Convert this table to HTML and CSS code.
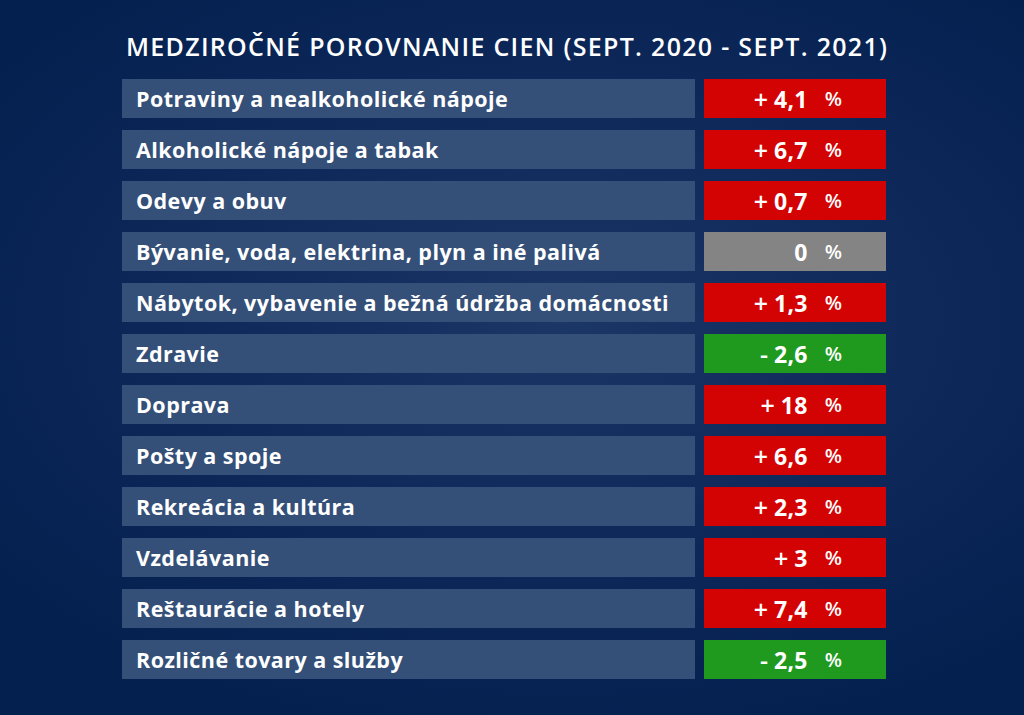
FILE: index.html
```html
<!DOCTYPE html>
<html lang="sk">
<head>
<meta charset="utf-8">
<link rel="stylesheet" href="styles.css">
</head>
<body>
<div class="page">
  <h1 class="title">MEDZIROČNÉ POROVNANIE CIEN (SEPT. 2020 - SEPT. 2021)</h1>
  <div class="table">
    <div class="label">Potraviny a nealkoholické nápoje</div>
    <div class="value up"><span class="sign">+</span><span class="num">4,1</span><span class="pct">%</span></div>
    <div class="label">Alkoholické nápoje a tabak</div>
    <div class="value up"><span class="sign">+</span><span class="num">6,7</span><span class="pct">%</span></div>
    <div class="label">Odevy a obuv</div>
    <div class="value up"><span class="sign">+</span><span class="num">0,7</span><span class="pct">%</span></div>
    <div class="label">Bývanie, voda, elektrina, plyn a iné palivá</div>
    <div class="value zero"><span class="num">0</span><span class="pct">%</span></div>
    <div class="label">Nábytok, vybavenie a bežná údržba domácnosti</div>
    <div class="value up"><span class="sign">+</span><span class="num">1,3</span><span class="pct">%</span></div>
    <div class="label">Zdravie</div>
    <div class="value down"><span class="sign">-</span><span class="num">2,6</span><span class="pct">%</span></div>
    <div class="label">Doprava</div>
    <div class="value up"><span class="sign">+</span><span class="num">18</span><span class="pct">%</span></div>
    <div class="label">Pošty a spoje</div>
    <div class="value up"><span class="sign">+</span><span class="num">6,6</span><span class="pct">%</span></div>
    <div class="label">Rekreácia a kultúra</div>
    <div class="value up"><span class="sign">+</span><span class="num">2,3</span><span class="pct">%</span></div>
    <div class="label">Vzdelávanie</div>
    <div class="value up"><span class="sign">+</span><span class="num">3</span><span class="pct">%</span></div>
    <div class="label">Reštaurácie a hotely</div>
    <div class="value up"><span class="sign">+</span><span class="num">7,4</span><span class="pct">%</span></div>
    <div class="label">Rozličné tovary a služby</div>
    <div class="value down"><span class="sign">-</span><span class="num">2,5</span><span class="pct">%</span></div>
  </div>
</div>
</body>
</html>
```

FILE: styles.css
```css
html, body {
  margin: 0;
  padding: 0;
}
body {
  width: 1024px;
  height: 715px;
  overflow: hidden;
  background: radial-gradient(ellipse 70% 60% at 55% 45%, #1b3766 0%, #102a5b 45%, #03204f 100%);
  font-family: "Open Sans", "Lato", sans-serif;
  color: #ffffff;
}
.page {
  padding: 29px 0 0 122px;
}
.title {
  margin: 0 0 0 4px;
  font-size: 25px;
  font-weight: 600;
  line-height: 34px;
  letter-spacing: 1.3px;
  white-space: nowrap;
}
.table {
  margin-top: 16px;
  display: grid;
  grid-template-columns: 573px 182px;
  column-gap: 9px;
  row-gap: 12px;
  grid-auto-rows: 39px;
}
.label {
  background: #344f78;
  display: flex;
  align-items: center;
  padding-left: 14px;
  font-size: 21.5px;
  font-weight: 700;
  letter-spacing: 0.45px;
  white-space: nowrap;
}
.value {
  display: flex;
  align-items: center;
  justify-content: flex-end;
  padding-right: 44px;
}
.up { background: #d40303; }
.down { background: #1f9a1f; }
.zero { background: #848484; }
.sign {
  font-size: 25px;
  font-weight: 600;
  margin-right: 6px;
}
.num {
  font-size: 23px;
  font-weight: 700;
  letter-spacing: 0.3px;
}
.pct {
  font-size: 20px;
  font-weight: 600;
  margin-left: 17px;
}
```
